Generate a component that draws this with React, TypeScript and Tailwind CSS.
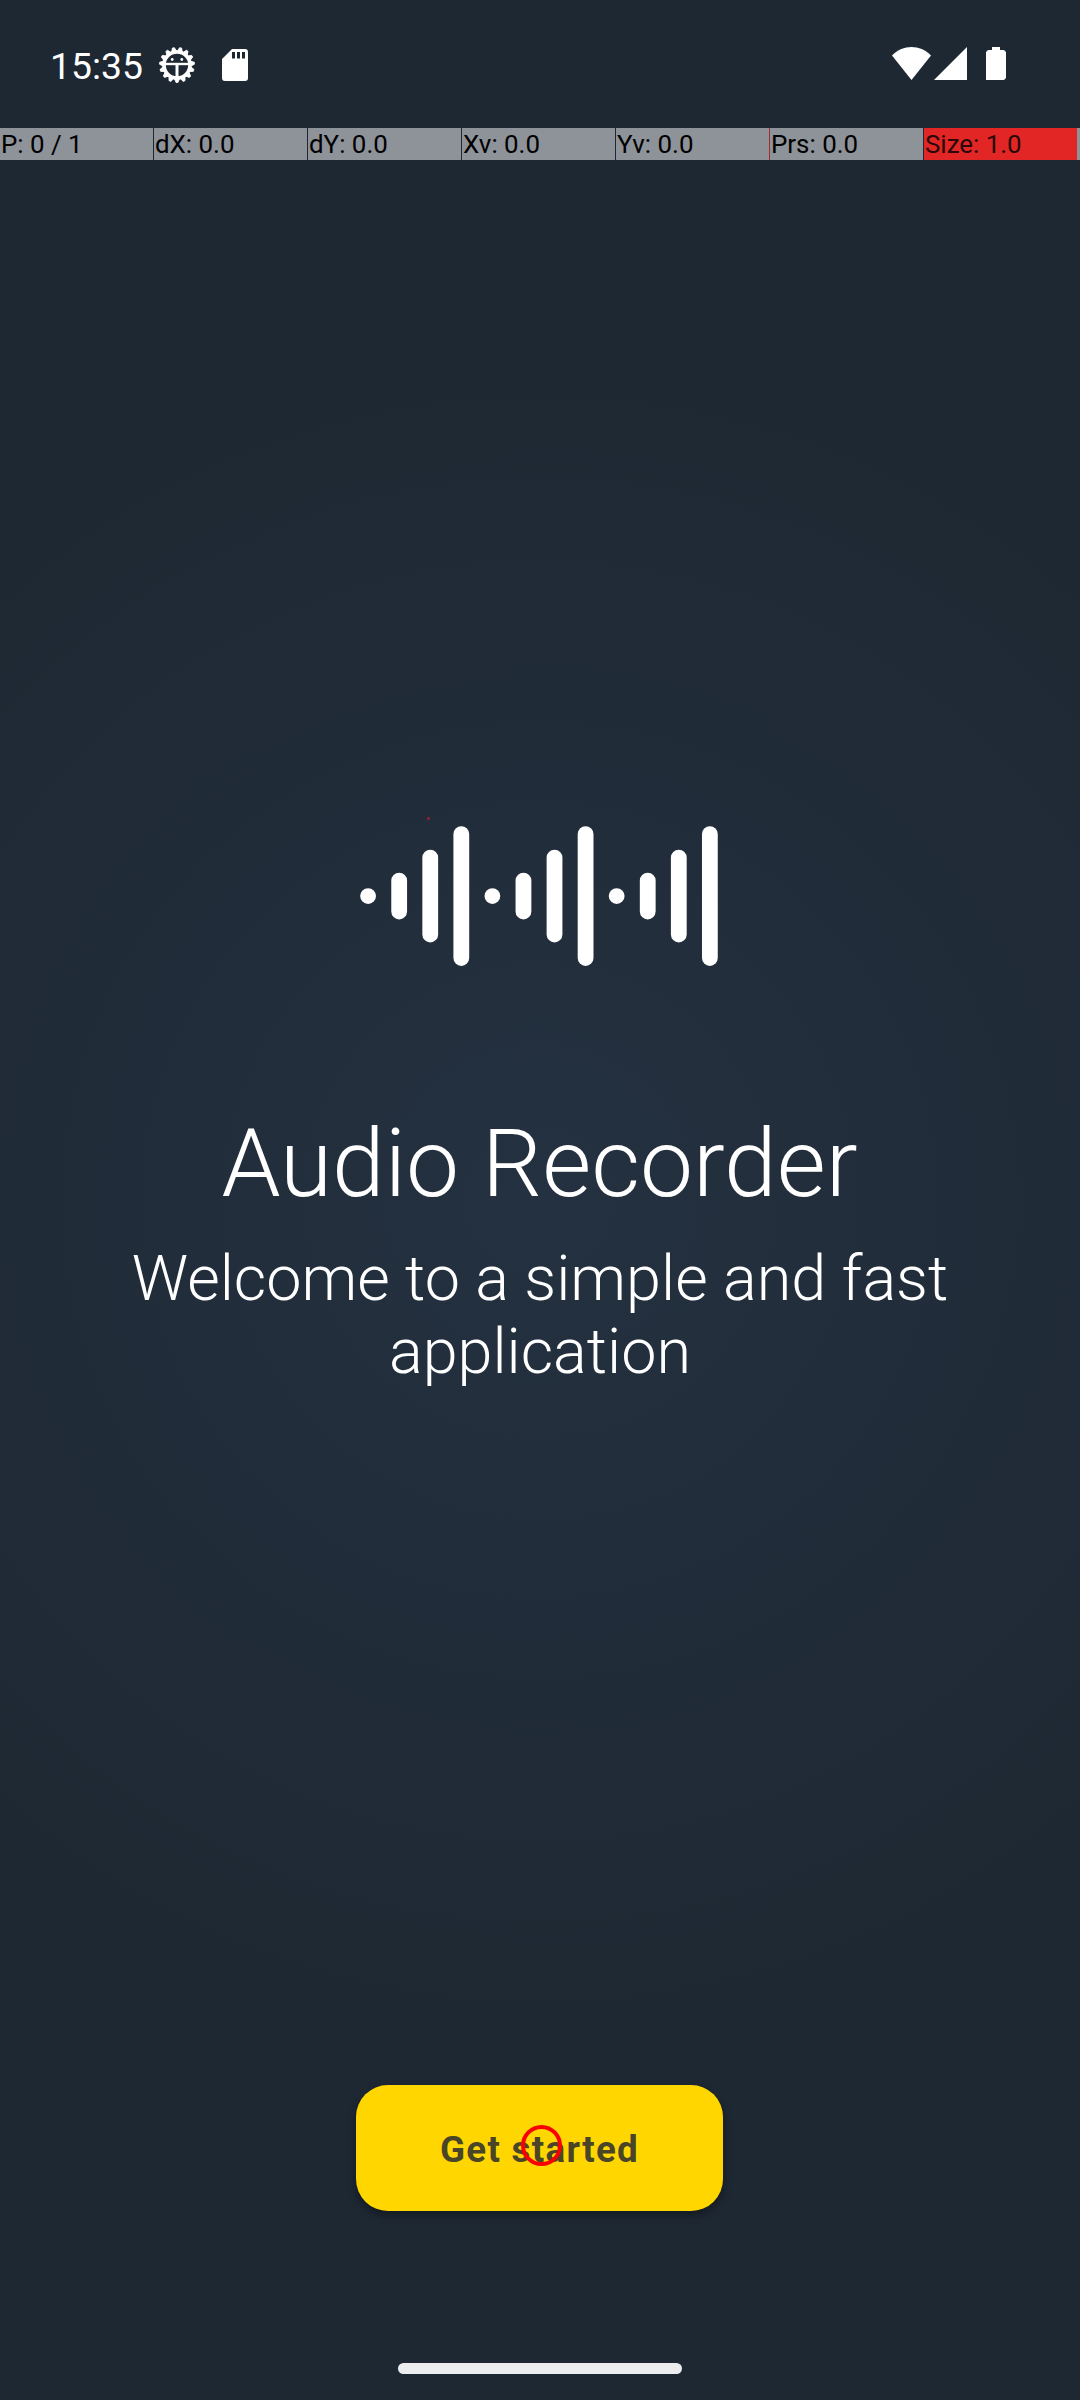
const metrics = ["P: 0 / 1", "dX: 0.0", "dY: 0.0", "Xv: 0.0", "Yv: 0.0", "Prs: 0.0"];

function GearFaceIcon() {
  const teeth = Array.from({ length: 15 }, (_, i) => 180 + i * 24);
  return (
    <svg className="ml-[16px] mt-[46px] h-[38px] w-[38px] shrink-0" viewBox="-19 -19 38 38">
      <circle r="13" fill="none" stroke="#fff" strokeWidth="3.6" />
      {teeth.map((a) => (
        <path
          key={a}
          d="M-2.400 -14L-1 -17.500H1L2.400 -14Z"
          fill="#fff"
          stroke="#fff"
          strokeWidth="0.8"
          strokeLinejoin="round"
          transform={`rotate(${a})`}
        />
      ))}
      <path d="M-12 -1H12" stroke="#fff" strokeWidth="2.4" />
      <path d="M0 0V12" stroke="#fff" strokeWidth="3" />
      <circle cx="-4.800" cy="-5.500" r="1.4" fill="#fff" />
      <circle cx="4.800" cy="-5.500" r="1.4" fill="#fff" />
    </svg>
  );
}

function SdCardIcon() {
  return (
    <svg className="ml-[26px] mt-[49px] h-[32px] w-[26px] shrink-0" viewBox="0 0 26 32">
      <path
        fill="#fff"
        fillRule="evenodd"
        d="M10 0H23Q26 0 26 3V29Q26 32 23 32H3Q0 32 0 29V10ZM10 3V9.500H13V3ZM15 3V9.500H18V3ZM20 3V9.500H23V3Z"
      />
    </svg>
  );
}

function StatusBar() {
  return (
    <header className="flex h-[128px] items-start">
      <span className="ml-[50px] mt-[44px] w-[92px] whitespace-nowrap text-[37.3px] leading-[45px]">15:35</span>
      <GearFaceIcon />
      <SdCardIcon />
      <svg className="ml-auto mt-[47px] h-[33px] w-[39px]" viewBox="0 0 39 33">
        <path fill="#fff" d="M0 8.500C11-2.800 28-2.800 39 8.500L19.500 33Z" />
      </svg>
      <svg className="ml-[3px] mt-[47px] h-[33px] w-[33px]" viewBox="0 0 33 33">
        <path fill="#fff" d="M33 0V33H0Z" />
      </svg>
      <svg className="ml-[19px] mr-[74px] mt-[47px] h-[33px] w-[20px]" viewBox="0 0 20 33">
        <path fill="#fff" d="M6 0H14V3H18L20 5V31L18 33H0V5L2 3H6Z" />
      </svg>
    </header>
  );
}

function PointerBar() {
  return (
    <div className="flex h-[32px] text-[25.9px] leading-[32px] text-black">
      {metrics.map((m, i) => (
        <div
          key={m}
          className={`w-[154px] shrink-0 whitespace-nowrap border-r bg-[#8e9299] pl-px ${
            i === 4 ? "border-[#a32a2e]" : "border-[#1e2833]"
          }`}
        >
          {m}
        </div>
      ))}
      <div className="w-[153px] shrink-0 whitespace-nowrap bg-[#e22626] pl-px text-[#2a0808]">Size: 1.0</div>
      <div className="grow bg-[#8e9299]" />
    </div>
  );
}

function WaveLogo() {
  const heights = [16, 47, 93, 140];
  return (
    <div className="relative mt-[666px] mr-px h-[140px] w-[359px]">
      <svg className="h-[140px] w-[358px]" viewBox="0 0 358 140">
        {Array.from({ length: 12 }, (_, i) => {
          const h = heights[i % 4];
          return <rect key={i} x={i * 31.07 + 0.2} y={70.2 - h / 2} width="15.8" height={h - 0.3} rx="7.9" fill="#fff" />;
        })}
      </svg>
      <span className="absolute left-[67px] -top-[9px] size-[3px] bg-[#7a2532]" />
    </div>
  );
}

export default function App() {
  return (
    <div className="flex h-[2400px] w-[1080px] flex-col overflow-hidden bg-[#1e2833] bg-[radial-gradient(circle_at_540px_1200px,#243140_0px,#1e2833_830px)] font-[Roboto,sans-serif] text-white">
      <StatusBar />
      <PointerBar />
      <main className="flex grow flex-col items-center">
        <WaveLogo />
        <h1 className="mt-[143px] mr-px text-[94.7px] font-light leading-[110px]">Audio Recorder</h1>
        <p className="mt-[23px] w-[880px] text-center text-[62.9px] font-light leading-[73px]">
          Welcome to a simple and fast application
        </p>
        <button className="relative mt-auto mr-px mb-[152px] h-[126px] w-[367px] rounded-[32px] bg-[#ffd600] pt-[2px] text-[36.75px] font-bold leading-[43px] tracking-[1.3px] text-[#4a4528] shadow-[0_4px_8px_rgba(0,0,0,0.4)]">
          Get started
          <span className="absolute left-[165px] top-[40px] size-[41px] rounded-full border-4 border-[#fb0000]" />
        </button>
        <div className="mb-[26px] h-[11px] w-[284px] rounded-full bg-[#ecedef]" />
      </main>
    </div>
  );
}
